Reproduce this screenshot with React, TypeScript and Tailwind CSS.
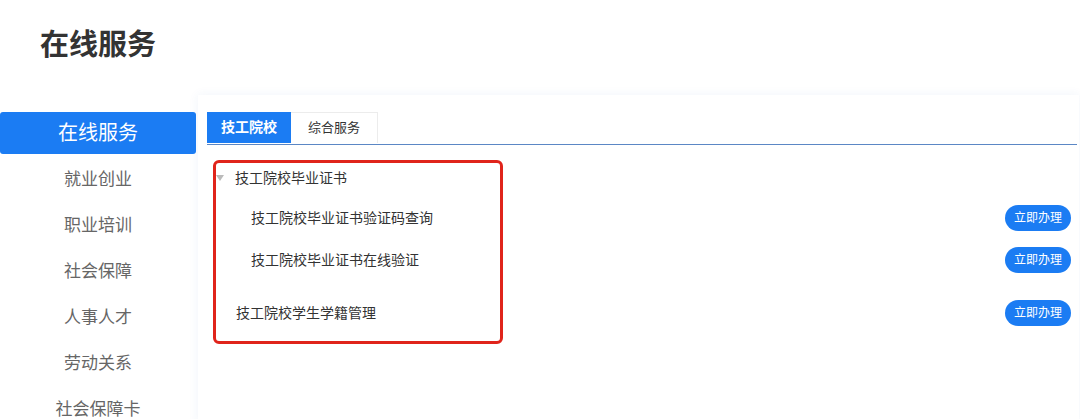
const menu = ["就业创业", "职业培训", "社会保障", "人事人才", "劳动关系", "社会保障卡"];

const ActionButton = () => (
    <button className="h-[26px] w-[66px] rounded-full bg-[#1b7cf3] text-[12px] text-white leading-none">
        立即办理
    </button>
);

const App = () => {
    return (
        <div className="relative h-[419px] w-[1080px] overflow-hidden bg-white font-['Liberation_Sans','Noto_Sans_CJK_SC',sans-serif]">
            {/** Page title **/}
            <div className="h-[95px] pl-[40px] pt-[27px]">
                <h1 className="text-[29px] font-bold leading-[37px] text-[#333]">在线服务</h1>
            </div>

            <div className="flex">
                {/** Sidebar **/}
                <aside className="w-[196px] shrink-0 pt-[17px]">
                    <div className="flex h-[42px] items-center justify-center rounded-[3px] bg-[#1b7cf3] text-[20px] text-white">
                        在线服务
                    </div>
                    <ul className="mt-[3px]">
                        {menu.map((m) => (
                            <li key={m} className="flex h-[46px] items-center justify-center text-[17px] text-[#666]">
                                {m}
                            </li>
                        ))}
                    </ul>
                </aside>

                {/** Main panel **/}
                <main className="ml-[2px] mr-[1px] h-[330px] flex-1 pl-[9px] pr-[2px] pt-[17px] shadow-[0_0_10px_rgba(40,100,190,0.07)]">
                    <div className="flex h-[33px] border-b border-[#5b87c5]">
                        <div className="flex h-[31px] w-[84px] items-center justify-center bg-[#1b7cf3] text-[14px] font-bold text-white">
                            技工院校
                        </div>
                        <div className="flex h-[31px] w-[87px] items-center justify-center border-r border-t border-[#ececec] text-[13px] text-[#333]">
                            综合服务
                        </div>
                    </div>

                    <div className="mt-[14px] pr-[6px] text-[14px] text-[#333]">
                        <div className="flex h-[38px] items-center pl-[9px]">
                            <span className="mr-[11px] h-0 w-0 border-x-[4px] border-t-[6px] border-x-transparent border-t-[#bbb]" />
                            技工院校毕业证书
                        </div>
                        <div className="flex h-[42px] items-center justify-between pl-[44px]">
                            <span>技工院校毕业证书验证码查询</span>
                            <ActionButton />
                        </div>
                        <div className="flex h-[42px] items-center justify-between pl-[44px]">
                            <span>技工院校毕业证书在线验证</span>
                            <ActionButton />
                        </div>
                        <div className="mt-[11px] flex h-[42px] items-center justify-between pl-[29px]">
                            <span>技工院校学生学籍管理</span>
                            <ActionButton />
                        </div>
                    </div>
                </main>
            </div>

            {/** Highlight annotation **/}
            <div className="pointer-events-none absolute left-[213px] top-[160px] h-[184px] w-[290px] rounded-[6px] border-[3px] border-[#e0241b]" />
        </div>
    );
};

export default App;
